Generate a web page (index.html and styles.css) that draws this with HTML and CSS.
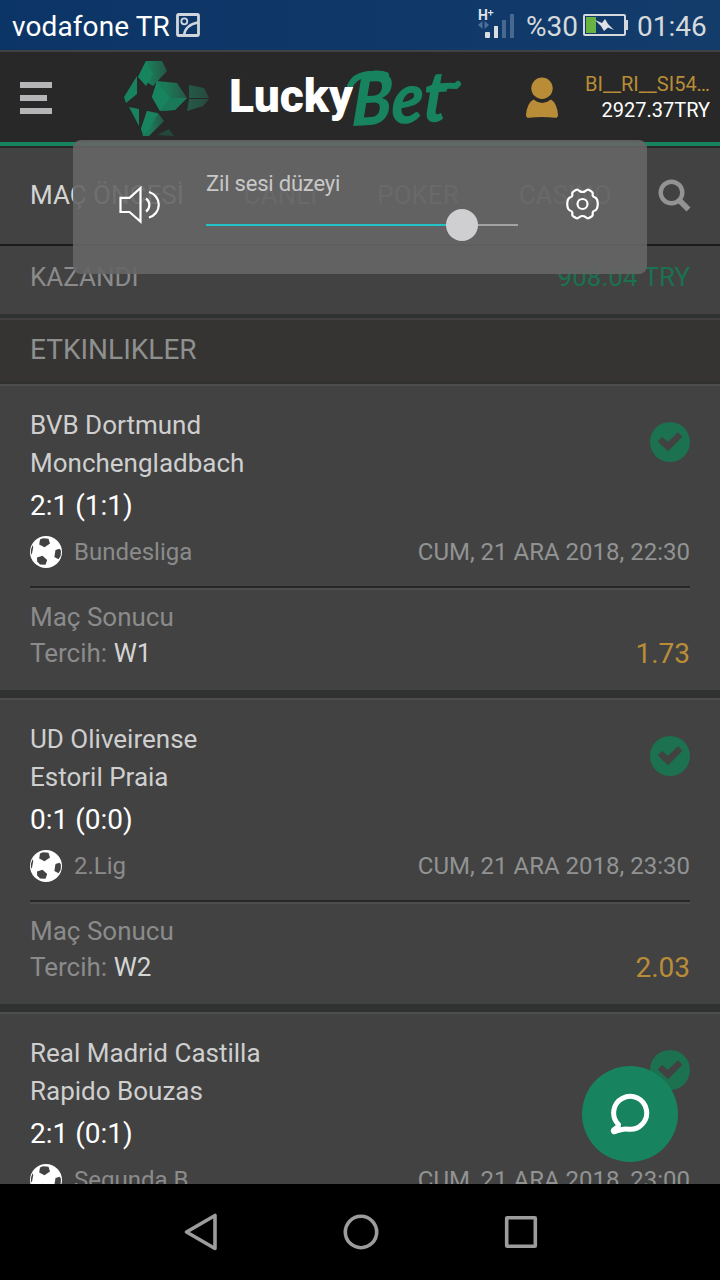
FILE: index.html
```html
<!DOCTYPE html>
<html lang="tr">
<head>
    <meta charset="UTF-8">
    <meta name="viewport" content="width=device-width, initial-scale=1.0">
    <title>LuckyBet</title>
    <link rel="stylesheet" href="styles.css">
</head>
<body>
    <!-- shared icons -->
    <svg class="sprite" width="0" height="0">
        <symbol id="ball" viewBox="0 0 32 32">
            <circle cx="16" cy="16" r="16" fill="#fff"/>
            <g fill="#424242">
                <path d="M10 3.5 13 2.2 18.5 2.8 20 7.5 14.5 11.3 9.2 8.5z"/>
                <path d="M25.5 14 29.5 12.8 31 14.5 30.6 20 28.5 23.2 24.4 21z"/>
                <path d="M7 21.5 12.5 19.8 17.2 24 15.5 28.8 10 28.5 7.2 25.5z"/>
                <path d="M2.6 9 3.2 11.5 2 17.5 1 18.5A16 16 0 0 1 2.6 9z"/>
            </g>
        </symbol>
        <symbol id="check" viewBox="0 0 40 40">
            <circle cx="20" cy="20" r="20" fill="#1b7150"/>
            <path d="M7.7 19.5 12.3 14.9 17.8 20 28 10.2 32.3 14.7 18 29.3z" fill="#424242"/>
        </symbol>
    </svg>

    <div class="screen">
        <div class="status-bar">
            <span class="carrier">vodafone TR</span>
            <svg class="pic-icon" width="24" height="24" viewBox="0 0 24 24" fill="none" stroke="#d0d6dc">
                <rect x="1.5" y="1.5" width="21" height="21" rx="1" stroke-width="2.8"/>
                <circle cx="8.3" cy="8.3" r="3" stroke-width="1.8"/>
                <path d="M8 22C9 15 14 11 22 9.5" stroke-width="2.4"/>
            </svg>
            <svg class="signal" width="38" height="32" viewBox="0 0 38 32">
                <text x="1" y="12" class="signal-text">H</text>
                <path d="M11 4.7H16.4M13.7 2V7.4" stroke="#dfe3e8" stroke-width="1.2"/>
                <path d="M5.5 13V21L1 17zM7.5 13V21L12 17z" fill="#4d719b"/>
                <rect x="8" y="24" width="5" height="6" rx="1" fill="#dcdfe2"/>
                <rect x="17" y="18" width="4" height="12" fill="#dcdfe2"/>
                <rect x="25" y="12" width="4" height="18" fill="#47698f"/>
                <rect x="33" y="6" width="4" height="24" fill="#47698f"/>
            </svg>
            <span class="percent">%30</span>
            <svg class="battery" width="46" height="22" viewBox="0 0 46 22">
                <rect x="1" y="1" width="41" height="20" rx="1" fill="none" stroke="#d6d9dc" stroke-width="2"/>
                <rect x="43" y="6" width="2" height="10" fill="#d6d9dc"/>
                <rect x="3" y="3" width="10" height="16" fill="#69b342"/>
                <path d="M12 6 19 9 22 5 25 10 31 16 25 13.5 21 17 18 12z" fill="#e0e3e5"/>
            </svg>
            <span class="clock">01:46</span>
        </div>

        <div class="header">
            <div class="menu"><span></span><span></span><span></span></div>
            <svg class="logo" width="350" height="90" viewBox="0 0 350 90">
                <defs>
                    <linearGradient id="fade"><stop offset=".4" stop-color="#1a7b58"/><stop offset="1" stop-color="#275545"/></linearGradient>
                    <linearGradient id="fade2"><stop offset="0" stop-color="#245b48"/><stop offset="1" stop-color="#274a3e"/></linearGradient>
                </defs>
                <path d="M26 9H42L47 19 33 34 18 25z" fill="url(#fade)"/>
                <path d="M26 9 18 25 26 34 33 22z" fill="#17845f"/>
                <path d="M17 24V42L6 51 4 45z" fill="#17845f"/>
                <path d="M9 55 19 57V74z" fill="#17845f"/>
                <path d="M27 59 38 61 44 69 29 84H23L21 77z" fill="url(#fade)"/>
                <path d="M27 59 38 62 25 83 21 77z" fill="#17845f"/>
                <path d="M37 29 57 31 67 46 55 58 40 59 32 45z" fill="url(#fade)"/>
                <path d="M37 29 32 45 40 59 50 46z" fill="#17845f"/>
                <path d="M50 46H67L55 58 40 59z" fill="#197958"/>
                <path d="M69 33 84 36 89 46H69zM69 47H89L83 54 67 59z" fill="url(#fade2)"/>
                <path d="M37 83 49 77 54 84z" fill="#25473b"/>
                <text class="logo-bet" transform="translate(231 74) skewX(-6) rotate(-3)" textLength="95" lengthAdjust="spacingAndGlyphs">Bet</text>
                <!-- swashes of the wordmark -->
                <path d="M229 38Q232 22 254 21.500Q262 21 266 23" class="swash"/>
                <path d="M312 36Q324 33 336 34L338 32" class="swash"/>
                <text x="109" y="60" class="logo-lucky" textLength="124" lengthAdjust="spacingAndGlyphs">Lucky</text>
            </svg>
            <svg class="user-icon" width="32" height="42" viewBox="0 0 32 42" fill="#b98d37">
                <circle cx="16" cy="11.3" r="10.7"/>
                <path d="M7.500 22.500Q16 29.500 25 22.500Q31 26 32 38Q32 41 29 40.800Q16 39 3 40.800Q0 41 0 38Q1 26 7.500 22.500z"/>
            </svg>
            <div class="account">
                <div class="account-name">BI__RI__SI54…</div>
                <div class="account-balance">2927.37TRY</div>
            </div>
        </div>

        <div class="content">
            <div class="tabs">
                <div class="tab-list">
                    <span class="tab active">MAÇ ÖNCESİ</span>
                    <span class="tab">CANLI</span>
                    <span class="tab">POKER</span>
                    <span class="tab">CASINO</span>
                </div>
                <svg class="search" width="34" height="34" viewBox="0 0 34 34" fill="none" stroke="#939393">
                    <circle cx="13.5" cy="13.5" r="10.8" stroke-width="4.4"/>
                    <path d="M21 21 30.5 30.5" stroke-width="5.6"/>
                </svg>
            </div>

            <div class="won">
                <span>KAZANDI</span>
                <span class="won-amount">908.04 TRY</span>
            </div>

            <div class="section-title">ETKINLIKLER</div>

            <div class="card">
                <svg class="card-check" width="40" height="40"><use href="#check"/></svg>
                <div class="team">BVB Dortmund</div>
                <div class="team">Monchengladbach</div>
                <div class="score">2:1 (1:1)</div>
                <div class="league">
                    <svg width="32" height="32"><use href="#ball"/></svg>
                    <span>Bundesliga</span>
                    <span class="date">CUM, 21 ARA 2018, 22:30</span>
                </div>
                <div class="bet">
                    <div>Maç Sonucu</div>
                    <div class="pick"><span>Tercih: <b>W1</b></span><span class="odd">1.73</span></div>
                </div>
            </div>

            <div class="card">
                <svg class="card-check" width="40" height="40"><use href="#check"/></svg>
                <div class="team">UD Oliveirense</div>
                <div class="team">Estoril Praia</div>
                <div class="score">0:1 (0:0)</div>
                <div class="league">
                    <svg width="32" height="32"><use href="#ball"/></svg>
                    <span>2.Lig</span>
                    <span class="date">CUM, 21 ARA 2018, 23:30</span>
                </div>
                <div class="bet">
                    <div>Maç Sonucu</div>
                    <div class="pick"><span>Tercih: <b>W2</b></span><span class="odd">2.03</span></div>
                </div>
            </div>

            <div class="card">
                <svg class="card-check" width="40" height="40"><use href="#check"/></svg>
                <div class="team">Real Madrid Castilla</div>
                <div class="team">Rapido Bouzas</div>
                <div class="score">2:1 (0:1)</div>
                <div class="league">
                    <svg width="32" height="32"><use href="#ball"/></svg>
                    <span>Segunda B</span>
                    <span class="date">CUM, 21 ARA 2018, 23:00</span>
                </div>
            </div>
        </div>

        <div class="nav-bar">
            <svg width="36" height="40" viewBox="0 0 36 40"><path d="M32 3.5V36.500L3.500 20z"/></svg>
            <svg width="36" height="40" viewBox="0 0 36 40"><circle cx="18" cy="20" r="15.7"/></svg>
            <svg width="36" height="40" viewBox="0 0 36 40"><rect x="3.7" y="5.7" width="28.6" height="28.6" rx=".5"/></svg>
        </div>

        <div class="volume">
            <svg class="speaker" width="42" height="38" viewBox="0 0 42 38">
                <path d="M1.500 11.800H10.500L21.500 2V35.500L10.500 26H1.500z"/>
                <path d="M27 12.500A8 8 0 0 1 27 25.500M30 6A13.200 13.200 0 0 1 30 31.500"/>
            </svg>
            <div class="volume-main">
                <div class="volume-label">Zil sesi düzeyi</div>
                <div class="slider"><div class="slider-fill"></div><div class="slider-knob"></div><div class="slider-rest"></div></div>
            </div>
            <svg class="gear" width="35" height="34" viewBox="0 0 35 34">
                <path d="M7.300 8.800V6Q7.500 4.800 11.500 2.800Q12.800 2.400 14.500 4Q17.500 6 20.500 4Q22.200 2.400 23.500 2.800Q27.500 4.800 27.700 6V8.800Q28 10 30.500 10.800Q32.500 12 32.800 17Q32.500 22 30.500 23.200Q28 24 27.700 25.200V28Q27.500 29.200 23.500 31.200Q22.200 31.600 20.500 30Q17.500 28 14.500 30Q12.800 31.600 11.500 31.200Q7.500 29.200 7.300 28V25.200Q7 24 4.500 23.200Q2.500 22 2.200 17Q2.500 12 4.500 10.800Q7 10 7.300 8.800z"/>
                <circle cx="17.5" cy="17" r="5"/>
            </svg>
        </div>

        <div class="chat">
            <svg width="40" height="42" viewBox="0 0 40 42">
                <path d="M8.500 31.500A16.500 16.500 0 1 1 18 36.200Q14 35.200 4 38.800Q2.500 37.500 4 36.500Q8.500 34.500 8.500 31.500z"/>
            </svg>
        </div>
    </div>
</body>
</html>
```

FILE: styles.css
```css
* {
    box-sizing: border-box;
}

body {
    margin: 0;
    background-color: #000;
    font-family: Roboto, "Liberation Sans", sans-serif;
}

svg {
    display: block;
    flex: none;
}

.sprite {
    position: absolute;
}

.screen {
    position: relative;
    display: flex;
    flex-direction: column;
    width: 720px;
    height: 1280px;
    overflow: hidden;
}

/* status bar */
.status-bar {
    display: flex;
    align-items: center;
    height: 50px;
    padding: 2px 12px 0 12px;
    background: linear-gradient(90deg, #0c3567, #133c6b);
    color: #fff;
    font-size: 28px;
    white-space: nowrap;
}

.carrier {
    width: 164px;
    letter-spacing: 0.1px;
}

.pic-icon {
    margin-bottom: 2px;
}

.signal {
    margin-left: auto;
    margin-bottom: 5px;
}

.signal-text {
    fill: #dfe3e8;
    font-size: 14px;
    font-weight: bold;
}

.percent {
    width: 55px;
    margin-left: 11px;
    color: #d6d9dc;
}

.battery {
    margin-left: 2px;
    margin-bottom: 2px;
}

.clock {
    width: 71px;
    margin-left: 8px;
    color: #d6d9dc;
}

/* header */
.header {
    display: flex;
    align-items: center;
    height: 96px;
    padding: 0 10px 0 20px;
    background-color: #282828;
    border-top: 2px solid #414141;
    border-bottom: 4px solid #17845f;
}

.menu {
    display: flex;
    flex-direction: column;
    gap: 7px;
    width: 32px;
    margin-top: 2px;
}

.menu span {
    height: 6px;
    background-color: #b5b5b7;
}

.menu span:nth-child(2) {
    width: 27px;
}

.logo {
    margin-left: 68px;
}

.logo-lucky {
    fill: #fff;
    font-size: 47px;
    font-weight: 900;
}

.logo-bet {
    fill: #17845f;
    font-family: Lato, sans-serif;
    font-size: 71px;
    font-style: italic;
    font-weight: 900;
}

.swash {
    fill: none;
    stroke: #17845f;
    stroke-width: 6;
    stroke-linecap: round;
}

.user-icon {
    margin-top: 1px;
    margin-left: 56px;
}

.account {
    margin-left: auto;
    text-align: right;
    font-size: 20px;
    line-height: 26px;
}

.account-name {
    color: #b98d37;
}

.account-balance {
    color: #fff;
}

/* page content */
.content {
    flex: 1;
    min-height: 0;
    overflow: hidden;
    background-color: #303232;
    color: #8b8b8b;
    font-size: 26px;
}

.tabs {
    display: flex;
    justify-content: space-between;
    height: 100px;
    padding: 0 28px 0 30px;
    align-items: center;
    background-color: #424242;
    border-top: 2px solid #282828;
    border-bottom: 2px solid #1c1c1c;
}

.tab-list {
    display: flex;
    gap: 60px;
    margin-bottom: 2px;
}

.tab.active {
    color: #d4d4d4;
}

.won {
    display: flex;
    justify-content: space-between;
    height: 68px;
    margin-bottom: 4px;
    padding: 12px 30px 0;
    background-color: #424242;
    line-height: 38px;
}

.won-amount {
    color: #1b7150;
}

.section-title {
    height: 66px;
    padding: 0 30px;
    background-color: #363432;
    border-top: 2px solid #424140;
    border-bottom: 2px solid #303232;
    color: #8e9090;
    font-size: 28px;
    line-height: 60px;
}

.card {
    position: relative;
    height: 306px;
    margin-bottom: 8px;
    padding: 20px 30px 0;
    background-color: #424242;
    border-top: 2px solid #4d4d4d;
}

.card-check {
    position: absolute;
    top: 35.5px;
    right: 30px;
}

.team {
    color: #cfcfcf;
    line-height: 38px;
}

.score {
    margin-top: 5px;
    color: #fff;
    font-size: 28px;
    line-height: 38px;
}

.league {
    display: flex;
    align-items: center;
    gap: 12px;
    margin-top: 11px;
    font-size: 24px;
    line-height: 32px;
}

.date {
    margin-left: auto;
    color: #919393;
}

.bet {
    margin-top: 18px;
    padding-top: 11px;
    border-top: 2px solid #272727;
    box-shadow: inset 0 2px #4d4d4d;
    line-height: 36px;
}

.pick {
    display: flex;
    justify-content: space-between;
}

.pick b {
    color: #d4d4d4;
    font-weight: normal;
}

.odd {
    color: #b98d37;
    font-size: 28px;
    line-height: 38px;
}

/* android buttons */
.nav-bar {
    display: flex;
    align-items: center;
    gap: 124px;
    height: 96px;
    padding-left: 183px;
    background-color: #000;
}

.nav-bar svg {
    fill: none;
    stroke: #9b9c9c;
    stroke-width: 3.6;
    stroke-linejoin: round;
}

/* volume panel over the page */
.volume {
    position: absolute;
    top: 140px;
    left: 73px;
    display: flex;
    width: 574px;
    height: 134px;
    padding: 0 46px;
    border-radius: 8px;
    background-color: rgba(101, 101, 101, 0.91);
}

.volume svg {
    fill: none;
    stroke: #fff;
    stroke-width: 2.2;
}

.speaker {
    margin-top: 46px;
}

.volume-main {
    width: 312px;
    margin-left: 45px;
    padding-top: 31px;
}

.volume-label {
    color: #c8c8c8;
    font-size: 22px;
    letter-spacing: -0.2px;
    line-height: 26px;
}

.slider {
    display: flex;
    align-items: center;
    height: 32px;
    margin-top: 12px;
}

.slider-fill {
    width: 240px;
    height: 2px;
    background-color: #22c2c9;
}

.slider-knob {
    width: 32px;
    height: 32px;
    border-radius: 50%;
    background-color: #cfcfd1;
}

.slider-rest {
    flex: 1;
    height: 2px;
    background-color: #a3a3a3;
}

.gear {
    margin: 47px 0 0 47px;
}

/* chat button */
.chat {
    position: absolute;
    left: 582px;
    top: 1066px;
    display: flex;
    justify-content: center;
    align-items: center;
    width: 96px;
    height: 96px;
    border-radius: 50%;
    background-color: #17845f;
}

.chat svg {
    fill: none;
    stroke: #fff;
    stroke-width: 5;
    stroke-linejoin: round;
}
```
